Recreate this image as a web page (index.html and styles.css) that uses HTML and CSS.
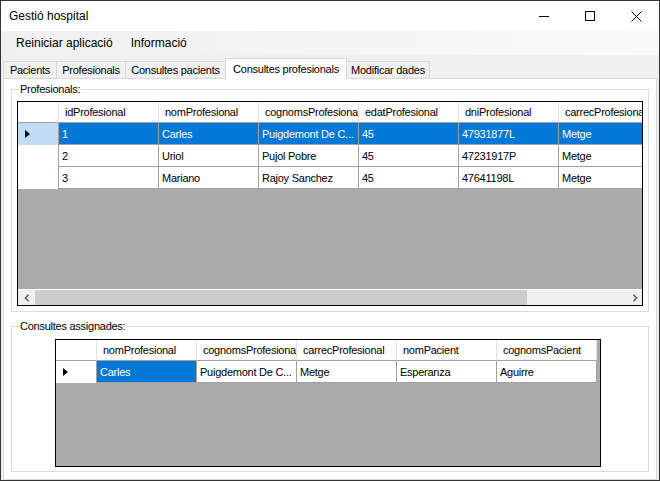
FILE: index.html
```html
<!DOCTYPE html>
<html lang="ca">
<head>
<meta charset="utf-8">
<title>Gestió hospital</title>
<link rel="stylesheet" href="styles.css">
</head>
<body>
<div class="window">
  <div class="titlebar">
    <div class="title">Gestió hospital</div>
    <div class="controls">
      <div class="ctl"><svg width="10" height="10" viewBox="0 0 10 10"><path d="M0 5.5H10" stroke="#000" stroke-width="1"/></svg></div>
      <div class="ctl"><svg width="10" height="10" viewBox="0 0 10 10"><rect x="0.5" y="0.5" width="9" height="9" fill="none" stroke="#000" stroke-width="1"/></svg></div>
      <div class="ctl"><svg width="11" height="11" viewBox="0 0 11 11"><path d="M0.5 0.5L10.5 10.5M10.5 0.5L0.5 10.5" stroke="#000" stroke-width="1"/></svg></div>
    </div>
  </div>
  <div class="menubar">
    <span class="menu-item">Reiniciar aplicació</span>
    <span class="menu-item">Informació</span>
  </div>
  <div class="tabctl">
    <div class="tabstrip">
      <div class="tab t1">Pacients</div>
      <div class="tab t2">Profesionals</div>
      <div class="tab t3">Consultes pacients</div>
      <div class="tab t4 active">Consultes profesionals</div>
      <div class="tab t5">Modificar dades</div>
    </div>
    <div class="panel">
      <div class="group group1">
        <div class="glabel">Profesionals:</div>
        <div class="dgv dgv1">
          <div class="row head">
            <div class="rh"></div>
            <div class="cell">idProfesional</div>
            <div class="cell">nomProfesional</div>
            <div class="cell">cognomsProfesional</div>
            <div class="cell">edatProfesional</div>
            <div class="cell">dniProfesional</div>
            <div class="cell">carrecProfesional</div>
          </div>
          <div class="row body sel">
            <div class="rh rh-sel"><span class="arrow"></span></div>
            <div class="cell">1</div>
            <div class="cell">Carles</div>
            <div class="cell">Puigdemont De C...</div>
            <div class="cell">45</div>
            <div class="cell">47931877L</div>
            <div class="cell">Metge</div>
          </div>
          <div class="row body">
            <div class="rh"></div>
            <div class="cell">2</div>
            <div class="cell">Uriol</div>
            <div class="cell">Pujol Pobre</div>
            <div class="cell">45</div>
            <div class="cell">47231917P</div>
            <div class="cell">Metge</div>
          </div>
          <div class="row body">
            <div class="rh"></div>
            <div class="cell">3</div>
            <div class="cell">Mariano</div>
            <div class="cell">Rajoy Sanchez</div>
            <div class="cell">45</div>
            <div class="cell">47641198L</div>
            <div class="cell">Metge</div>
          </div>
          <div class="fill"></div>
          <div class="hscroll">
            <div class="sb-btn"><svg width="6" height="8" viewBox="0 0 6 8"><path d="M4.6 0.8L1.4 4L4.6 7.2" fill="none" stroke="#606060" stroke-width="1.6"/></svg></div>
            <div class="sb-track"><div class="sb-thumb"></div></div>
            <div class="sb-btn sb-right"><svg width="6" height="8" viewBox="0 0 6 8"><path d="M1.4 0.8L4.6 4L1.4 7.2" fill="none" stroke="#606060" stroke-width="1.6"/></svg></div>
          </div>
        </div>
      </div>
      <div class="group group2">
        <div class="glabel">Consultes assignades:</div>
        <div class="dgv dgv2">
          <div class="row head">
            <div class="rh"></div>
            <div class="cell">nomProfesional</div>
            <div class="cell">cognomsProfesional</div>
            <div class="cell">carrecProfesional</div>
            <div class="cell">nomPacient</div>
            <div class="cell">cognomsPacient</div>
          </div>
          <div class="row body">
            <div class="rh"><span class="arrow"></span></div>
            <div class="cell cell-sel">Carles</div>
            <div class="cell">Puigdemont De C...</div>
            <div class="cell">Metge</div>
            <div class="cell">Esperanza</div>
            <div class="cell">Aguirre</div>
          </div>
          <div class="fill"></div>
        </div>
      </div>
    </div>
  </div>
</div>
</body>
</html>
```

FILE: styles.css
```css
* { box-sizing: border-box; }
html, body { margin: 0; padding: 0; }
body {
  width: 660px;
  height: 481px;
  overflow: hidden;
  background: #fff;
  font-family: "Liberation Sans", Arial, sans-serif;
  color: #000;
}
.window {
  width: 660px;
  height: 481px;
  border: 1px solid #333;
  background: #f0f0f0;
  display: flex;
  flex-direction: column;
}
.titlebar {
  height: 30px;
  flex-shrink: 0;
  background: #fff;
  display: flex;
  align-items: center;
}
.title {
  flex: 1;
  padding-left: 8px;
  font-size: 12px;
}
.controls { display: flex; height: 30px; }
.ctl {
  width: 46px;
  height: 30px;
  display: flex;
  align-items: center;
  justify-content: center;
}
.menubar {
  height: 24px;
  flex-shrink: 0;
  display: flex;
  align-items: center;
  gap: 18px;
  padding-left: 15px;
  font-size: 12px;
  background: linear-gradient(to right, #f0f0f0, #f9f9f9);
}
.tabctl {
  flex: 1;
  padding: 3px 2px 0;
  display: flex;
  flex-direction: column;
}
.tabstrip {
  height: 20px;
  flex-shrink: 0;
  display: flex;
  align-items: flex-end;
  position: relative;
  z-index: 1;
}
.tab {
  height: 17px;
  border: 1px solid #d9d9d9;
  border-bottom: none;
  background: #f0f0f0;
  font-size: 11px;
  letter-spacing: -0.25px;
  white-space: nowrap;
  display: flex;
  align-items: center;
  justify-content: center;
  margin-left: -1px;
  flex-shrink: 0;
}
.tab.t1 { margin-left: 0; width: 54px; }
.tab.t2 { width: 70px; }
.tab.t3 { width: 101px; }
.tab.t4 { width: 122px; }
.tab.t5 { width: 84px; }
.tab.active {
  height: 21px;
  background: #fff;
  margin-bottom: -1px;
  position: relative;
  z-index: 2;
}
.panel {
  height: 402px;
  flex-shrink: 0;
  border: 1px solid #d9d9d9;
  background: #fff;
  padding: 10px 7px 7px;
  display: flex;
  flex-direction: column;
  gap: 14px;
}
.group {
  position: relative;
  border: 1px solid #dcdcdc;
  flex-shrink: 0;
}
.group1 { height: 223px; padding: 11px 5px 0; }
.group2 { height: 146px; padding: 12px 0 0 43px; }
.glabel {
  position: absolute;
  top: -7px;
  left: 7px;
  padding: 0 1px;
  background: #fff;
  font-size: 11px;
  line-height: 13px;
  letter-spacing: -0.25px;
  white-space: nowrap;
}
.dgv {
  border: 1px solid #000;
  background: #ababab;
  display: flex;
  flex-direction: column;
  overflow: hidden;
  font-size: 11px;
  letter-spacing: -0.25px;
}
.dgv1 { width: 626px; height: 205px; }
.dgv2 { width: 546px; height: 128px; }
.row {
  display: flex;
  flex-shrink: 0;
  overflow: hidden;
}
.row.head { height: 21px; }
.row.body { height: 22px; }
.rh {
  width: 41px;
  flex-shrink: 0;
  background: #fff;
  border-right: 1px solid #a0a0a0;
  display: flex;
  align-items: center;
  padding-left: 7px;
}
.cell {
  width: 100px;
  flex-shrink: 0;
  background: #fff;
  border-right: 1px solid #a0a0a0;
  border-bottom: 1px solid #a0a0a0;
  padding-left: 3px;
  display: flex;
  align-items: center;
  white-space: nowrap;
  overflow: hidden;
}
.head .rh {
  border-right-color: #e3e3e3;
  border-bottom: 1px solid #a0a0a0;
}
.head .cell {
  border-right-color: #e3e3e3;
  padding-left: 6px;
}
.sel .cell, .cell.cell-sel {
  background: #0078d7;
  color: #fff;
}
.rh.rh-sel { background: #c0dcf3; }
.arrow {
  width: 0;
  height: 0;
  border-left: 5px solid #000;
  border-top: 4px solid transparent;
  border-bottom: 4px solid transparent;
}
.fill { flex: 1; }
.hscroll {
  height: 16px;
  flex-shrink: 0;
  border-top: 1px solid #fff;
  background: #f0f0f0;
  display: flex;
}
.sb-btn {
  width: 17px;
  flex-shrink: 0;
  display: flex;
  align-items: center;
  justify-content: center;
}
.sb-right { padding-left: 3px; }
.sb-track { flex: 1; }
.sb-thumb {
  width: 492px;
  height: 100%;
  background: #cdcdcd;
}
```
